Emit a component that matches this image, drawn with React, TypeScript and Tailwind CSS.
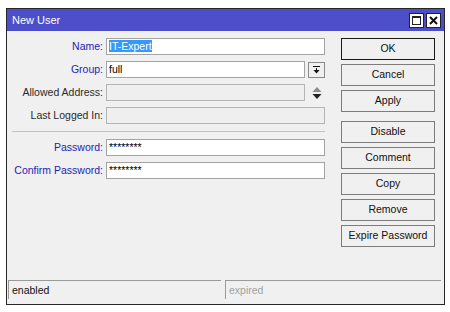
import type { ReactNode } from 'react';

const font = { fontFamily: '"Liberation Sans", Arial, sans-serif' };

function Label({ children, blue }: { children: ReactNode; blue?: boolean }) {
    return (
        <div
            className={`w-[99px] shrink-0 pr-[3px] text-right leading-[17px] ${
                blue ? 'text-[#2424b4]' : 'text-[#2a2a2a]'
            }`}
        >
            {children}
        </div>
    );
}

function Field({ children, disabled, className = 'w-[219px]' }: { children?: ReactNode; disabled?: boolean; className?: string }) {
    return (
        <div
            className={`h-[17px] ${className} border px-[2px] leading-[15px] ${
                disabled ? 'border-[#b4b4b4] bg-[#efefef]' : 'border-[#a3a3a3] bg-white'
            }`}
        >
            {children}
        </div>
    );
}

function Btn({ children, primary }: { children: ReactNode; primary?: boolean }) {
    return (
        <div
            className={`flex h-[22px] w-[94px] items-center justify-center border bg-[#f0f0f0] text-[#111] ${
                primary ? 'border-[#1a1a1a]' : 'border-[#7c7c7c]'
            }`}
        >
            {children}
        </div>
    );
}

export default function App() {
    return (
        <div className="h-[312px] w-[450px] bg-white pl-[6px] pt-[8px] text-[10.5px]" style={font}>
            <div className="flex h-[297px] w-[439px] flex-col border border-[#262626] bg-[#f0f0f0]">
                <div className="flex h-[22px] items-center justify-between bg-[#4c4fc9] pl-[5px] pr-[3px]">
                    <span className="text-[11px] text-white">New User</span>
                    <div className="flex gap-[2px]">
                        <div className="flex h-[15px] w-[15px] items-center justify-center border border-[#222] bg-white">
                            <div className="h-[9px] w-[9px] border border-[#222] border-t-2" />
                        </div>
                        <div className="flex h-[15px] w-[15px] items-center justify-center border border-[#222] bg-white">
                            <svg width="9" height="9" viewBox="0 0 9 9">
                                <path d="M1 1L8 8M8 1L1 8" stroke="#111" strokeWidth="2" />
                            </svg>
                        </div>
                    </div>
                </div>

                <div className="flex flex-1 pt-[7px]">
                    <div className="flex w-[334px] flex-col">
                        <div className="flex flex-col gap-[6px]">
                            <div className="flex items-center">
                                <Label blue>Name:</Label>
                                <Field>
                                    <span className="bg-[#3399ff] text-white">IT-Expert</span>
                                </Field>
                            </div>
                            <div className="flex items-center">
                                <Label blue>Group:</Label>
                                <Field className="w-[199px]">full</Field>
                                <div className="ml-[3px] flex h-[16px] w-[17px] items-center justify-center border border-[#8a8a8a] bg-[#f0f0f0]">
                                    <svg width="9" height="9" viewBox="0 0 9 9">
                                        <path d="M1 1.5H8" stroke="#111" strokeWidth="1" />
                                        <path d="M4 3H5V5H7.5L4.5 8.5L1.5 5H4Z" fill="#111" />
                                    </svg>
                                </div>
                            </div>
                            <div className="flex items-center">
                                <Label>Allowed Address:</Label>
                                <Field disabled className="w-[199px]" />
                                <div className="ml-[3px] flex w-[17px] justify-center">
                                    <svg width="10" height="14" viewBox="0 0 10 14">
                                        <path d="M5 1L9.5 6H0.5Z" fill="#8c8c8c" />
                                        <path d="M0.5 8H9.5L5 13Z" fill="#222" />
                                    </svg>
                                </div>
                            </div>
                            <div className="flex items-center">
                                <Label>Last Logged In:</Label>
                                <Field disabled />
                            </div>
                        </div>
                        <div className="my-[7px] ml-[5px] h-px w-[313px] bg-[#c2c2c2]" />
                        <div className="flex flex-col gap-[6px]">
                            <div className="flex items-center">
                                <Label blue>Password:</Label>
                                <Field>********</Field>
                            </div>
                            <div className="flex items-center">
                                <Label blue>Confirm Password:</Label>
                                <Field>********</Field>
                            </div>
                        </div>
                    </div>

                    <div className="flex flex-col gap-[4px]">
                        <Btn primary>OK</Btn>
                        <Btn>Cancel</Btn>
                        <Btn>Apply</Btn>
                        <div className="h-px" />
                        <Btn>Disable</Btn>
                        <Btn>Comment</Btn>
                        <Btn>Copy</Btn>
                        <Btn>Remove</Btn>
                        <Btn>Expire Password</Btn>
                    </div>
                </div>

                <div className="flex gap-[4px] pb-[5px] pl-[1px] pr-[3px]">
                    <div className="h-[19px] w-[213px] border-l border-t border-[#9a9a9a] pl-[3px] leading-[18px] text-[#111]">
                        enabled
                    </div>
                    <div className="h-[19px] flex-1 border-l border-t border-[#9a9a9a] pl-[3px] leading-[18px] text-[#a0a0a0]">
                        expired
                    </div>
                </div>
            </div>
        </div>
    );
}
